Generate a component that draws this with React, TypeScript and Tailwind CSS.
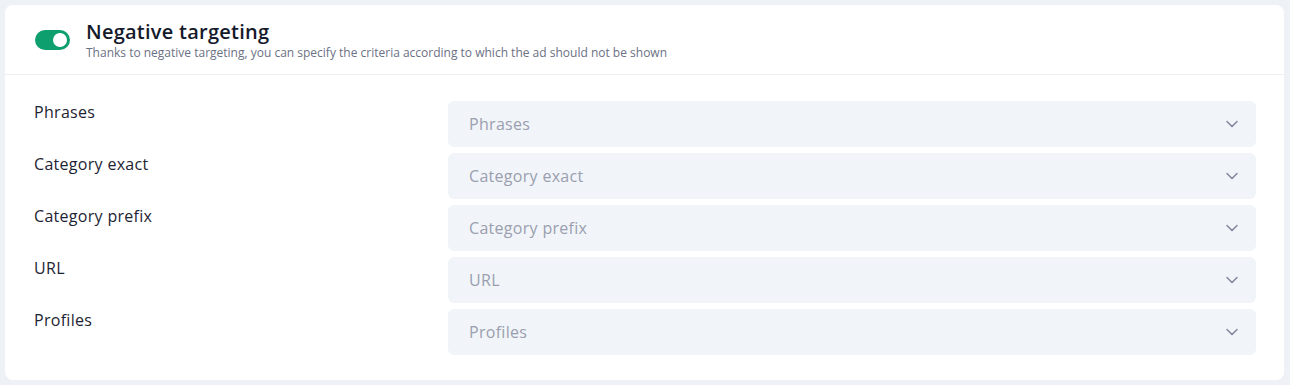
import React from "react";

const rows = ["Phrases", "Category exact", "Category prefix", "URL", "Profiles"];

function Chevron() {
  return (
    <svg width="14" height="14" viewBox="0 0 14 14" fill="none" className="text-[#7c8396]">
      <path d="M2 4.5 L7 9.5 L12 4.5" stroke="currentColor" strokeWidth="1.4" strokeLinecap="round" strokeLinejoin="round" />
    </svg>
  );
}

export default function App() {
  return (
    <div
      className="w-[1290px] h-[385px] bg-[#eef1f5] pt-[5px] pl-[5px] pr-[6px] pb-[5px]"
      style={{ fontFamily: '"Open Sans", "Noto Sans", sans-serif' }}
    >
      <div className="bg-white rounded-lg h-[375px] flex flex-col">
        <div className="flex items-center h-[70px] border-b border-[#eceef1] pl-[30px]">
          <div className="w-[35px] h-[20px] rounded-full bg-[#0e9f6e] flex items-center justify-end pr-[3px]">
            <div className="w-[14px] h-[14px] rounded-full bg-white" />
          </div>
          <div className="ml-[16px] flex flex-col pt-[3px]">
            <div className="text-[20px] leading-[22px] font-semibold text-[#151a2b] tracking-[0.25px]">Negative targeting</div>
            <div className="text-[12px] leading-[16px] text-[#6b7184] mt-[2px]">
              Thanks to negative targeting, you can specify the criteria according to which the ad should not be shown
            </div>
          </div>
        </div>
        <div className="flex flex-col gap-[6px] pt-[26px] pl-[29px] pr-[28px]">
          {rows.map((r) => (
            <div key={r} className="flex items-start">
              <div className="w-[414px] text-[16px] leading-[20px] pt-[1px] text-[#1e2433] tracking-[0.3px]">{r}</div>
              <div className="flex-1 h-[46px] rounded-md bg-[#f1f4f8] flex items-center justify-between pl-[21px] pr-[17px]">
                <span className="text-[16px] text-[#9a9fb0] tracking-[0.3px]">{r}</span>
                <Chevron />
              </div>
            </div>
          ))}
        </div>
      </div>
    </div>
  );
}
